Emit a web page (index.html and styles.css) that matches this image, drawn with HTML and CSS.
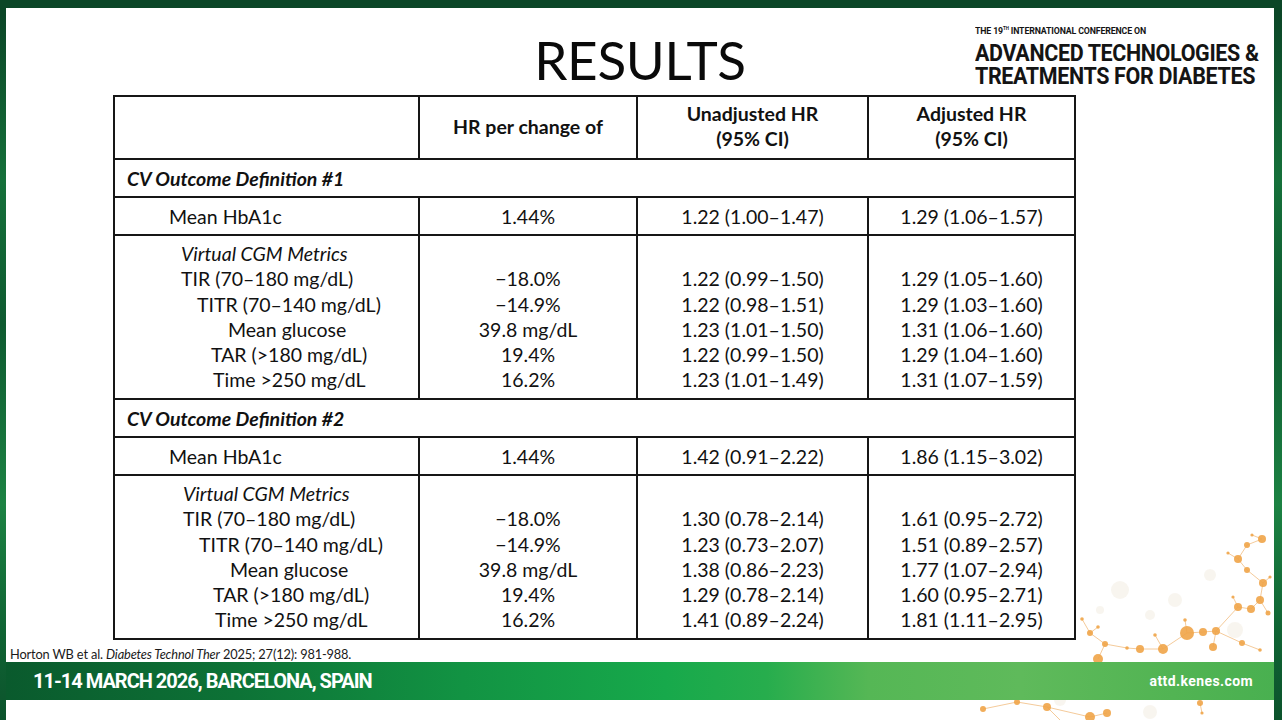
FILE: index.html
```html
<!DOCTYPE html>
<html lang="en">
<head>
<meta charset="utf-8">
<title>Results</title>
<link rel="stylesheet" href="styles.css">
</head>
<body>
<div class="frame">
  <div class="slide">
    <svg class="network" width="1268" height="712" viewBox="0 0 1268 712" aria-hidden="true">
      <g transform="translate(-6,-8)">
        <g class="pale">
          <circle cx="1120" cy="590" r="9"/><circle cx="1175" cy="600" r="7"/><circle cx="1210" cy="575" r="6"/>
          <circle cx="1150" cy="615" r="5"/><circle cx="1235" cy="630" r="8"/><circle cx="1100" cy="610" r="4"/>
          <circle cx="1060" cy="700" r="6"/><circle cx="1150" cy="712" r="7"/>
        </g>
        <g class="links">
          <path d="M1252 535 L1262 539 L1247 545 L1238 559 L1247 570 L1263 583 L1260 600 L1251 609 L1238 607"/>
          <path d="M1228 553 L1238 559 M1270 577 L1263 583 M1268 613 L1260 600 M1233 597 L1238 607"/>
          <path d="M1238 607 L1216 631 L1203 632 L1187 633 L1163 649 L1140 649 L1127 648"/>
          <path d="M1216 631 L1213 647 M1187 633 L1185 620 M1163 649 L1155 635 M1216 631 L1242 643 L1260 650"/>
          <path d="M1082 619 L1090 633 L1105 644 L1098 659 M1098 627 L1090 633 M1105 644 L1127 648"/>
          <path d="M983 709 L1017 702 L1047 707 L1090 717 L1107 713 M1200 703 L1202 713 M1047 707 L1060 720"/>
        </g>
        <g class="nodes">
          <circle cx="1262" cy="539" r="4"/><circle cx="1247" cy="545" r="3"/><circle cx="1252" cy="535" r="1.6"/>
          <circle cx="1238" cy="559" r="4"/><circle cx="1228" cy="553" r="1.6"/><circle cx="1247" cy="570" r="3"/>
          <circle cx="1263" cy="583" r="4"/><circle cx="1270" cy="577" r="1.6"/><circle cx="1260" cy="600" r="4"/>
          <circle cx="1238" cy="607" r="4"/><circle cx="1251" cy="609" r="4"/><circle cx="1233" cy="597" r="1.6"/>
          <circle cx="1268" cy="613" r="2.5"/><circle cx="1187" cy="633" r="7"/><circle cx="1203" cy="632" r="4"/>
          <circle cx="1216" cy="631" r="4"/><circle cx="1213" cy="647" r="4"/><circle cx="1185" cy="620" r="1.8"/>
          <circle cx="1163" cy="649" r="5"/><circle cx="1140" cy="649" r="4"/><circle cx="1127" cy="648" r="1.8"/>
          <circle cx="1155" cy="635" r="1.8"/><circle cx="1105" cy="644" r="3"/><circle cx="1090" cy="633" r="3"/>
          <circle cx="1082" cy="619" r="1.8"/><circle cx="1098" cy="627" r="1.8"/><circle cx="1098" cy="659" r="5"/>
          <circle cx="1242" cy="643" r="3"/><circle cx="1260" cy="650" r="1.8"/>
          <circle cx="983" cy="709" r="3"/><circle cx="1017" cy="702" r="3"/><circle cx="1047" cy="707" r="4"/>
          <circle cx="1090" cy="717" r="5"/><circle cx="1107" cy="713" r="4"/><circle cx="1200" cy="703" r="3"/>
          <circle cx="1202" cy="713" r="1.6"/>
        </g>
      </g>
    </svg>

    <header class="top">
      <h1 class="title">RESULTS</h1>
      <div class="logo">
        <div class="logo-small">THE 19<sup>TH</sup> INTERNATIONAL CONFERENCE ON</div>
        <div class="logo-big">ADVANCED TECHNOLOGIES &amp;</div>
        <div class="logo-big">TREATMENTS FOR DIABETES</div>
      </div>
    </header>

    <table class="results">
      <colgroup><col class="c1"><col class="c2"><col class="c3"><col class="c4"></colgroup>
      <thead>
        <tr class="r-head">
          <th></th>
          <th>HR per change of</th>
          <th>Unadjusted HR<br>(95% CI)</th>
          <th>Adjusted HR<br>(95% CI)</th>
        </tr>
      </thead>
      <tbody>
        <tr class="r-sec"><td colspan="4" class="sec">CV Outcome Definition #1</td></tr>
        <tr class="r-mean">
          <td class="label">Mean HbA1c</td>
          <td class="num">1.44%</td>
          <td class="num">1.22 (1.00–1.47)</td>
          <td class="num">1.29 (1.06–1.57)</td>
        </tr>
        <tr class="r-cgm">
          <td class="label">
            <div class="ln l-virt"><em>Virtual CGM Metrics</em></div>
            <div class="ln l-tir">TIR (70–180 mg/dL)</div>
            <div class="ln l-titr">TITR (70–140 mg/dL)</div>
            <div class="ln l-mean">Mean glucose</div>
            <div class="ln l-tar">TAR (&gt;180 mg/dL)</div>
            <div class="ln l-time">Time &gt;250 mg/dL</div>
          </td>
          <td class="num">
            <div class="ln">&nbsp;</div>
            <div class="ln">−18.0%</div>
            <div class="ln">−14.9%</div>
            <div class="ln">39.8 mg/dL</div>
            <div class="ln">19.4%</div>
            <div class="ln">16.2%</div>
          </td>
          <td class="num">
            <div class="ln">&nbsp;</div>
            <div class="ln">1.22 (0.99–1.50)</div>
            <div class="ln">1.22 (0.98–1.51)</div>
            <div class="ln">1.23 (1.01–1.50)</div>
            <div class="ln">1.22 (0.99–1.50)</div>
            <div class="ln">1.23 (1.01–1.49)</div>
          </td>
          <td class="num">
            <div class="ln">&nbsp;</div>
            <div class="ln">1.29 (1.05–1.60)</div>
            <div class="ln">1.29 (1.03–1.60)</div>
            <div class="ln">1.31 (1.06–1.60)</div>
            <div class="ln">1.29 (1.04–1.60)</div>
            <div class="ln">1.31 (1.07–1.59)</div>
          </td>
        </tr>
        <tr class="r-sec"><td colspan="4" class="sec">CV Outcome Definition #2</td></tr>
        <tr class="r-mean">
          <td class="label">Mean HbA1c</td>
          <td class="num">1.44%</td>
          <td class="num">1.42 (0.91–2.22)</td>
          <td class="num">1.86 (1.15–3.02)</td>
        </tr>
        <tr class="r-cgm">
          <td class="label">
            <div class="ln l-virt s2"><em>Virtual CGM Metrics</em></div>
            <div class="ln l-tir s2">TIR (70–180 mg/dL)</div>
            <div class="ln l-titr s2">TITR (70–140 mg/dL)</div>
            <div class="ln l-mean s2">Mean glucose</div>
            <div class="ln l-tar s2">TAR (&gt;180 mg/dL)</div>
            <div class="ln l-time s2">Time &gt;250 mg/dL</div>
          </td>
          <td class="num">
            <div class="ln">&nbsp;</div>
            <div class="ln">−18.0%</div>
            <div class="ln">−14.9%</div>
            <div class="ln">39.8 mg/dL</div>
            <div class="ln">19.4%</div>
            <div class="ln">16.2%</div>
          </td>
          <td class="num">
            <div class="ln">&nbsp;</div>
            <div class="ln">1.30 (0.78–2.14)</div>
            <div class="ln">1.23 (0.73–2.07)</div>
            <div class="ln">1.38 (0.86–2.23)</div>
            <div class="ln">1.29 (0.78–2.14)</div>
            <div class="ln">1.41 (0.89–2.24)</div>
          </td>
          <td class="num">
            <div class="ln">&nbsp;</div>
            <div class="ln">1.61 (0.95–2.72)</div>
            <div class="ln">1.51 (0.89–2.57)</div>
            <div class="ln">1.77 (1.07–2.94)</div>
            <div class="ln">1.60 (0.95–2.71)</div>
            <div class="ln">1.81 (1.11–2.95)</div>
          </td>
        </tr>
      </tbody>
    </table>

    <p class="cite">Horton WB et al. <em>Diabetes Technol Ther</em> 2025; 27(12): 981-988.</p>

    <footer class="band">
      <span class="date">11-14 MARCH 2026, BARCELONA, SPAIN</span>
      <span class="url">attd.kenes.com</span>
    </footer>
  </div>
</div>
</body>
</html>
```
FILE: styles.css
```css
* { box-sizing: border-box; }

html, body {
  margin: 0;
  padding: 0;
  width: 1282px;
  height: 720px;
  overflow: hidden;
}

body {
  font-family: "Lato", "Open Sans", sans-serif;
  color: #111;
}

.frame {
  width: 1282px;
  height: 720px;
  padding: 8px 8px 0 6px;
  background: linear-gradient(180deg, #0b4627 0%, #0b4627 2%, #15703a 25%, #0e5a30 45%, #1c8243 70%, #0f6333 88%, #0c532c 100%);
}

.slide {
  position: relative;
  width: 1268px;
  height: 712px;
  background: #fff;
  display: flex;
  flex-direction: column;
}

.network {
  position: absolute;
  left: 0;
  top: 0;
  z-index: 0;
}
.network .pale circle { fill: #f4efe4; opacity: 0.6; }
.network .links path { fill: none; stroke: #f3c48e; stroke-width: 0.9; }
.network .nodes circle { fill: #efa448; opacity: 0.9; }

/* header */
.top {
  position: relative;
  z-index: 1;
  width: 1268px;
  height: 87px;
  display: grid;
  grid-template-columns: 969px minmax(0, 1fr);
}

.title {
  grid-area: 1 / 1 / 2 / 3;
  justify-self: center;
  margin: 25px 0 0;
  font-family: "Lato", sans-serif;
  font-weight: 400;
  font-size: 53px;
  line-height: 53px;
  letter-spacing: -0.3px;
  color: #0a0a0a;
}

.logo {
  grid-area: 1 / 2 / 2 / 3;
  justify-self: start;
  margin-top: 17px;
  font-family: "Roboto", "Liberation Sans", sans-serif;
  font-weight: 700;
  color: #141414;
  white-space: nowrap;
  transform: scaleX(0.895);
  transform-origin: left top;
}

.logo-small {
  font-size: 9.8px;
  line-height: 12px;
  letter-spacing: -0.15px;
  margin-bottom: 5px;
}
.logo-small sup {
  font-size: 5px;
  vertical-align: 4px;
  line-height: 0;
}

.logo-big {
  font-size: 24px;
  line-height: 23px;
  letter-spacing: -0.4px;
}

/* table */
.results {
  position: relative;
  z-index: 1;
  margin-left: 107px;
  border-collapse: collapse;
  table-layout: fixed;
  width: 963px;
  font-size: 19.5px;
  background: #fff;
}

.c1 { width: 305px; }
.c2 { width: 218px; }
.c3 { width: 231px; }
.c4 { width: 207px; }

.results th,
.results td {
  border: 2px solid #161616;
  padding: 0;
  vertical-align: middle;
  line-height: 25px;
}

.results th {
  font-weight: 700;
  text-align: center;
  padding-bottom: 3px;
}

.r-head { height: 63px; }
.r-sec { height: 38px; }
.r-mean { height: 38px; }
.r-cgm { height: 164px; }

.sec {
  font-weight: 700;
  font-style: italic;
  padding-left: 12px !important;
}

.label { padding-left: 54px !important; }

.num { text-align: center; }

.r-cgm td {
  vertical-align: top;
  padding-top: 5px !important;
}
.r-cgm .label { padding-left: 0 !important; }

.ln { line-height: 25.3px; white-space: nowrap; }
.ln em { font-style: italic; }

.l-virt { padding-left: 66px; }
.l-tir { padding-left: 66px; }
.l-titr { padding-left: 82px; }
.l-mean { padding-left: 113px; }
.l-tar { padding-left: 96px; }
.l-time { padding-left: 98px; }
.ln.s2 { margin-left: 2px; }

/* citation */
.cite {
  position: relative;
  z-index: 1;
  margin: 7px 0 0 4px;
  font-size: 12.8px;
  line-height: 14px;
  letter-spacing: -0.15px;
  color: #1a1a1a;
}

/* footer band */
.band {
  position: relative;
  z-index: 1;
  margin-top: 1px;
  height: 38px;
  display: flex;
  align-items: center;
  justify-content: space-between;
  padding: 0 21px 0 27px;
  background: linear-gradient(90deg, #0a5a2d 0%, #0d7236 18%, #129343 36%, #17a94b 52%, #27ad4d 60%, #55b755 68%, #5fba5b 80%, #52b453 92%, #49b050 100%);
  color: #fff;
  font-family: "Roboto", "Liberation Sans", sans-serif;
  font-weight: 700;
}

.date {
  font-size: 20px;
  letter-spacing: -1px;
}

.url {
  font-size: 14px;
  letter-spacing: 0.4px;
}
```
